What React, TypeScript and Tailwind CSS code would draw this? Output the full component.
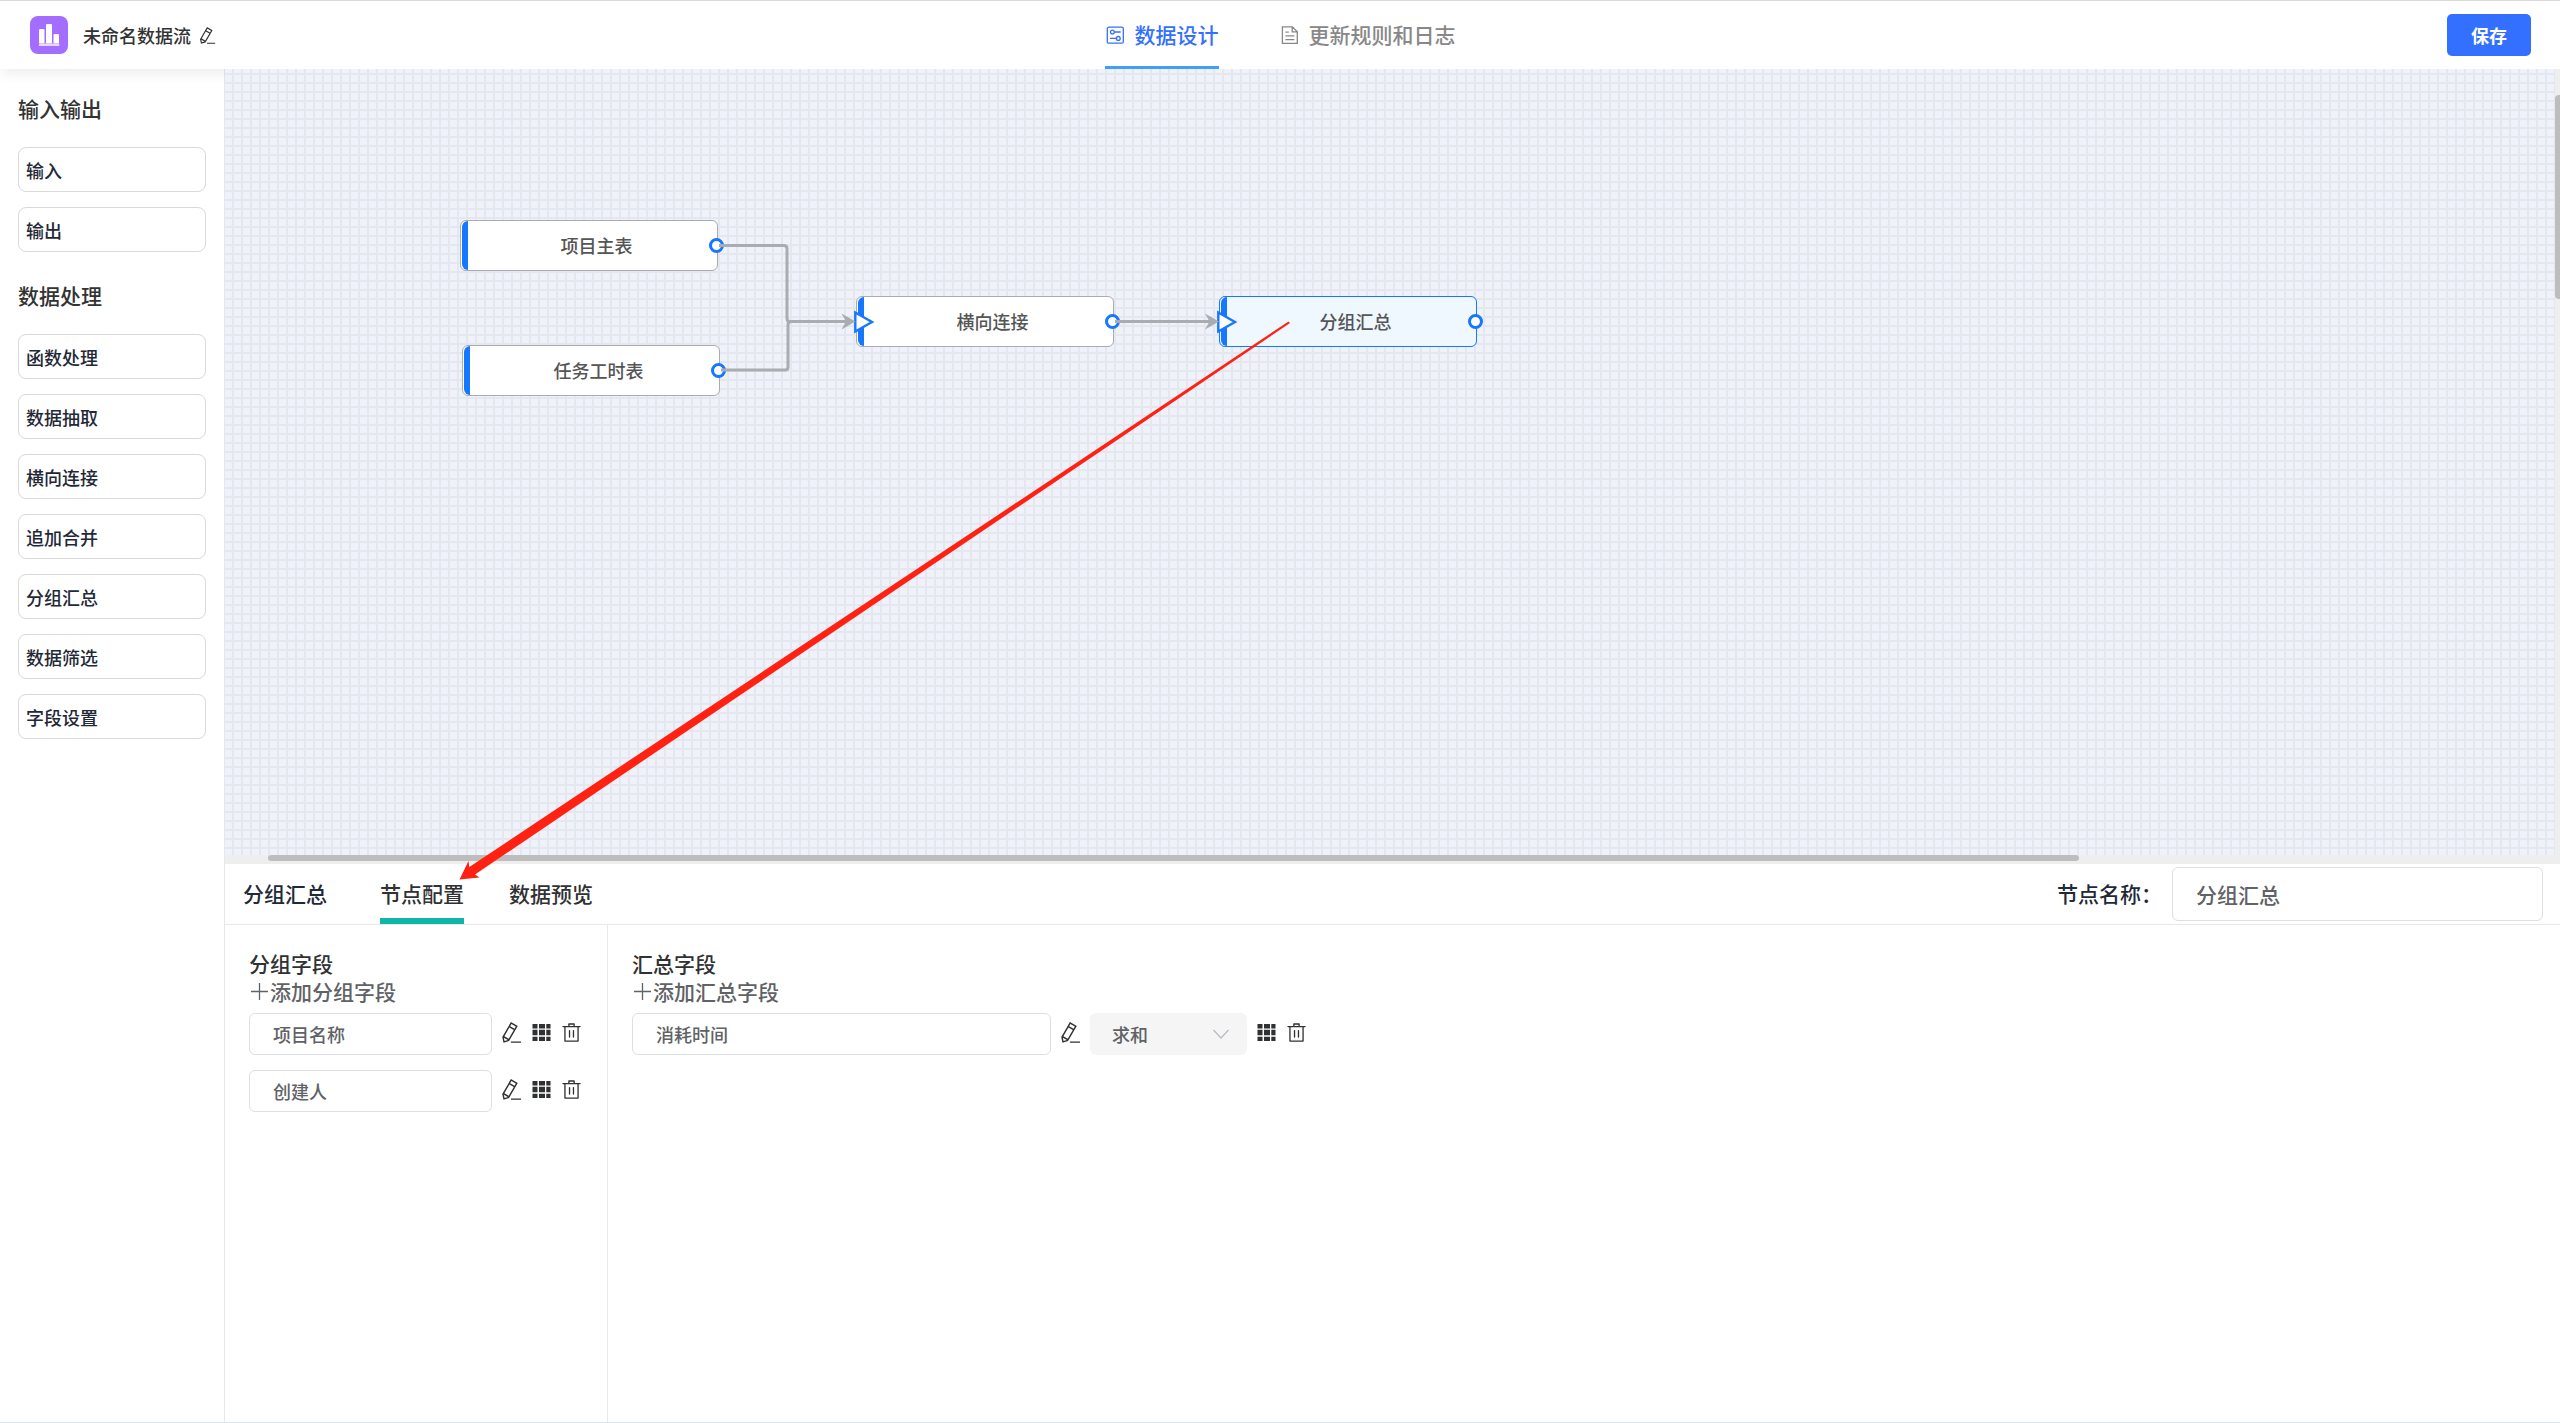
import type { ReactNode } from "react";

const EDIT_PATH =
  "m199.04 672.64 193.984 112 224-387.968-193.92-112-224 388.032zm-23.872 60.16 32.896 148.288 144.896-45.696zM455.04 229.248l193.92 112 56.704-98.112-193.984-112-56.64 98.112zM104.32 708.8l384-665.024 304.768 175.936L409.152 884.8h.064l-248.448 78.336zm384 254.272v-64h448v64z";
const DELETE_PATH =
  "M160 256H96a32 32 0 0 1 0-64h256V95.936a32 32 0 0 1 32-32h256a32 32 0 0 1 32 32V192h256a32 32 0 1 1 0 64h-64v672a32 32 0 0 1-32 32H192a32 32 0 0 1-32-32zm448-64v-64H416v64zM224 896h576V256H224zm192-128a32 32 0 0 1-32-32V416a32 32 0 0 1 64 0v320a32 32 0 0 1-32 32m192 0a32 32 0 0 1-32-32V416a32 32 0 0 1 64 0v320a32 32 0 0 1-32 32";

function EditIcon({ className }: { className: string }) {
  return (
    <svg viewBox="50 40 930 930" fill="currentColor" className={className} aria-hidden="true">
      <path d={EDIT_PATH} />
    </svg>
  );
}

function DeleteIcon() {
  return (
    <svg viewBox="0 0 1024 1024" fill="currentColor" className="size-[21px]" aria-hidden="true">
      <path d={DELETE_PATH} />
    </svg>
  );
}

function GridIcon() {
  return (
    <svg viewBox="0 0 21 21" fill="currentColor" className="size-[21px]" aria-hidden="true">
      <path d="M1.5 2h5v4.5h-5zM8 2h6v4.5H8zM15.3 2h4.2v4.5h-4.2zM1.5 7.7h5v5.6h-5zM8 7.7h6v5.6H8zM15.3 7.7h4.2v5.6h-4.2zM1.5 14.8h5V19h-5zM8 14.8h6V19H8zM15.3 14.8h4.2V19h-4.2z" />
    </svg>
  );
}

function LogoIcon() {
  return (
    <svg viewBox="0 0 38 38" className="size-[38px]" aria-hidden="true">
      <rect width="38" height="38" rx="8" fill="#a36dff" />
      <rect x="9" y="13" width="5.5" height="14.5" rx="1.2" fill="#fff" />
      <rect x="16" y="8" width="6" height="19.5" rx="1.2" fill="#fff" />
      <rect x="23.5" y="18" width="5.5" height="9.5" rx="1.2" fill="#fff" />
      <rect x="9" y="27.5" width="20.3" height="2.5" fill="#e6d8ff" />
    </svg>
  );
}

function DesignIcon() {
  return (
    <svg viewBox="0 0 20 20" fill="none" stroke="currentColor" strokeWidth="1.3" className="size-5" aria-hidden="true">
      <rect x="2.3" y="2.2" width="16" height="16" rx="1.5" />
      <circle cx="7.4" cy="7" r="1.9" />
      <path d="M9.3 7h6.4M5 13.4h6.4" />
      <circle cx="13.3" cy="13.4" r="1.9" />
    </svg>
  );
}

function LogIcon() {
  return (
    <svg viewBox="0 0 20 20" fill="none" stroke="currentColor" strokeWidth="1.3" className="size-5" aria-hidden="true">
      <path d="M3.4 1.8h10l4.9 4.9v11.6H3.4zM13.2 1.8v5.1h5.1M6.4 7.2h3.4M6.4 10.8h9M6.4 14.6h9" />
    </svg>
  );
}

function IconButton({ label, children }: { label: string; children: ReactNode }) {
  return (
    <button type="button" aria-label={label} className="shrink-0 pb-1 text-[#303133]">
      {children}
    </button>
  );
}

function PaletteGroup({ title, items }: { title: string; items: string[] }) {
  return (
    <section className="flex flex-col">
      <h2 className="mb-6 text-[21px] leading-[30px] font-medium text-[#333]">{title}</h2>
      <div className="flex flex-col gap-[15px]">
        {items.map((item) => (
          <button
            key={item}
            type="button"
            draggable
            className="h-[45px] rounded-lg border border-[#d9d9d9] bg-white px-[7px] text-left text-lg font-medium text-[#1f2937]"
          >
            {item}
          </button>
        ))}
      </div>
    </section>
  );
}

type FlowNode = { label: string; x: number; y: number; input?: boolean; selected?: boolean };

const NODES: FlowNode[] = [
  { label: "项目主表", x: 235, y: 151 },
  { label: "任务工时表", x: 237, y: 276 },
  { label: "横向连接", x: 631, y: 227, input: true },
  { label: "分组汇总", x: 994, y: 227, input: true, selected: true },
];

function NodeCard({ node }: { node: FlowNode }) {
  return (
    <div
      className={`absolute flex h-[51px] w-[258px] items-center justify-center rounded-md border pb-0.5 pl-[15px] text-lg font-medium text-[#555] ${
        node.selected ? "border-[#1677ff] bg-[#eff7ff]" : "border-[#a9acb0] bg-white"
      }`}
      style={{ left: node.x, top: node.y }}
    >
      <span className="absolute inset-y-0 left-px w-1.5 rounded-l-md bg-[#1677ff]" />
      {node.label}
      {node.input && (
        <svg viewBox="0 0 22 26" className="absolute top-3 -left-1 h-[26px] w-[22px]" aria-hidden="true">
          <path d="M2.3 3.5v19L19 13z" fill="#fff" stroke="#1677ff" strokeWidth="2.4" />
        </svg>
      )}
      <span className="absolute top-[17px] -right-[7px] size-[15px] rounded-full border-3 border-[#1677ff] bg-white" />
    </div>
  );
}

function Canvas() {
  return (
    <div className="relative flex-1 overflow-hidden bg-[#eff2fa] bg-[linear-gradient(to_right,#e4e7ee_2px,transparent_2px),linear-gradient(to_bottom,#e4e7ee_2px,transparent_2px)] bg-[length:9px_9px] bg-[position:7px_4px]">
      {NODES.map((node) => (
        <NodeCard key={node.label} node={node} />
      ))}
      <svg className="pointer-events-none absolute inset-0 size-full" aria-hidden="true">
        <g fill="none" stroke="#a9acb0" strokeWidth="3">
          <path d="M494 176.500H559q3 0 3 3V249.500q0 3 3 3H622" />
          <path d="M496 301H560q3 0 3-3V255.500q0-3 3-3" />
          <path d="M890 252.500H985" />
        </g>
        <g fill="#a9acb0">
          <path d="M630.500 252.500l-14-8 4.500 8-4.500 8z" />
          <path d="M994 252.500l-14-8 4.500 8-4.500 8z" />
        </g>
      </svg>
    </div>
  );
}

function FieldRow({ value, label, width, children }: { value: string; label: string; width: string; children?: ReactNode }) {
  return (
    <div className="flex items-center gap-[9px]">
      <input
        aria-label={label}
        defaultValue={value}
        className={`h-[42px] rounded-md border border-[#dcdfe6] bg-white px-[23px] text-lg font-medium text-[#606266] ${width}`}
      />
      <IconButton label="编辑">
        <EditIcon className="size-[21px]" />
      </IconButton>
      {children}
      <IconButton label="排序">
        <GridIcon />
      </IconButton>
      <IconButton label="删除">
        <DeleteIcon />
      </IconButton>
    </div>
  );
}

function FieldColumn({ title, action, className, children }: { title: string; action: string; className: string; children: ReactNode }) {
  return (
    <section className={`flex flex-col items-start px-6 pt-6 ${className}`}>
      <h3 className="text-[21px] leading-7 font-medium text-[#303133]">{title}</h3>
      <button type="button" className="flex items-center text-[21px] leading-7 font-medium text-[#606266]">
        <svg viewBox="0 0 21 21" fill="none" stroke="currentColor" strokeWidth="1.3" className="size-[21px]" aria-hidden="true">
          <path d="M10.500 2v17M2 10.500h17" />
        </svg>
        {action}
      </button>
      <div className="mt-2 flex flex-col gap-[15px]">{children}</div>
    </section>
  );
}

export default function App() {
  return (
    <div className="flex h-screen flex-col border-b border-[#dbe2ea] bg-white font-['Noto_Sans_CJK_SC','Noto_Sans',sans-serif]">
      <header className="relative z-10 grid h-[69px] shrink-0 grid-cols-[1fr_auto_1fr] border-t border-[#d9d9d9] bg-white shadow-[0_6px_12px_-2px_rgba(0,0,0,0.08)]">
        <div className="flex items-center pl-[30px]">
          <LogoIcon />
          <h1 className="ml-[15px] text-lg font-medium text-[#333]">未命名数据流</h1>
          <button type="button" aria-label="重命名" className="ml-2 text-[#333]">
            <EditIcon className="size-[17px]" />
          </button>
        </div>
        <nav className="flex gap-[60px] text-[21px] font-medium">
          <a href="#design" className="flex items-center gap-2.5 border-t-3 border-b-3 border-t-transparent border-b-[#409eff] text-[#3370ff]">
            <DesignIcon />
            数据设计
          </a>
          <a href="#rules" className="flex items-center gap-2.5 text-[#888]">
            <LogIcon />
            更新规则和日志
          </a>
        </nav>
        <div className="flex items-center justify-end pr-[29px]">
          <button type="button" className="h-[42px] w-[84px] rounded-[5px] bg-[#3370ff] text-lg font-bold text-white">
            保存
          </button>
        </div>
      </header>

      <div className="flex min-h-0 flex-1">
        <aside className="flex w-[225px] shrink-0 flex-col gap-7 border-r border-[#e4e7ed] px-[18px] pt-6">
          <PaletteGroup title="输入输出" items={["输入", "输出"]} />
          <PaletteGroup
            title="数据处理"
            items={["函数处理", "数据抽取", "横向连接", "追加合并", "分组汇总", "数据筛选", "字段设置"]}
          />
        </aside>

        <main className="relative z-20 flex min-w-0 flex-1 flex-col">
          <div className="flex min-h-0 flex-1">
            <Canvas />
            <div className="w-[5px] bg-[#eee] pt-[26px]">
              <div className="h-[204px] rounded-l-sm bg-[#bdbdbd]" />
            </div>
          </div>
          <div className="h-[9px] shrink-0 bg-[#eee] pl-[43px]">
            <div className="h-1.5 w-[79%] rounded-full bg-[#bdbdbd]" />
          </div>

          <div className="flex min-h-[558px] flex-col bg-white">
            <div className="flex h-[61px] items-stretch border-b border-[#e8e8e8] pr-[17px] pl-[18px] text-[21px] font-medium text-[#303133]">
              <h2 className="mr-[53px] flex items-center text-[#1f2937]">分组汇总</h2>
              <nav className="flex gap-[45px]">
                <a href="#config" className="flex items-center border-t-6 border-b-6 border-t-transparent border-b-[#0fb5a6]">
                  节点配置
                </a>
                <a href="#preview" className="flex items-center">
                  数据预览
                </a>
              </nav>
              <div className="ml-auto flex items-center gap-2.5">
                <label htmlFor="node-name" className="text-[#1f2937]">
                  节点名称：
                </label>
                <input
                  id="node-name"
                  defaultValue="分组汇总"
                  className="h-[54px] w-[371px] rounded-md border border-[#dcdfe6] bg-white px-[23px] font-medium text-[#606266]"
                />
              </div>
            </div>
            <div className="flex flex-1">
              <FieldColumn title="分组字段" action="添加分组字段" className="w-[383px] border-r border-[#e8e8e8]">
                <FieldRow value="项目名称" label="分组字段 1" width="w-[243px]" />
                <FieldRow value="创建人" label="分组字段 2" width="w-[243px]" />
              </FieldColumn>
              <FieldColumn title="汇总字段" action="添加汇总字段" className="flex-1">
                <FieldRow value="消耗时间" label="汇总字段 1" width="w-[419px]">
                  <div className="relative">
                    <select
                      aria-label="汇总方式"
                      className="h-[42px] w-[157px] appearance-none rounded-md bg-[#f5f5f5] px-[22px] text-lg font-medium text-[#606266]"
                    >
                      <option>求和</option>
                    </select>
                    <svg
                      viewBox="0 0 16 10"
                      fill="none"
                      stroke="#b8bcc4"
                      strokeWidth="1.3"
                      className="pointer-events-none absolute top-4 right-[18px] h-2.5 w-4"
                      aria-hidden="true"
                    >
                      <path d="M.5 1L8 9l7.500-8" />
                    </svg>
                  </div>
                </FieldRow>
              </FieldColumn>
            </div>
          </div>

          <svg className="pointer-events-none absolute inset-0 size-full" aria-hidden="true">
            <path d="M1063.500 252.500l1.500 1.500L250 805.500l4.500 3L234.500 810.500 243.500 792l.8 6z" fill="#ff2213" />
          </svg>
        </main>
      </div>
    </div>
  );
}
